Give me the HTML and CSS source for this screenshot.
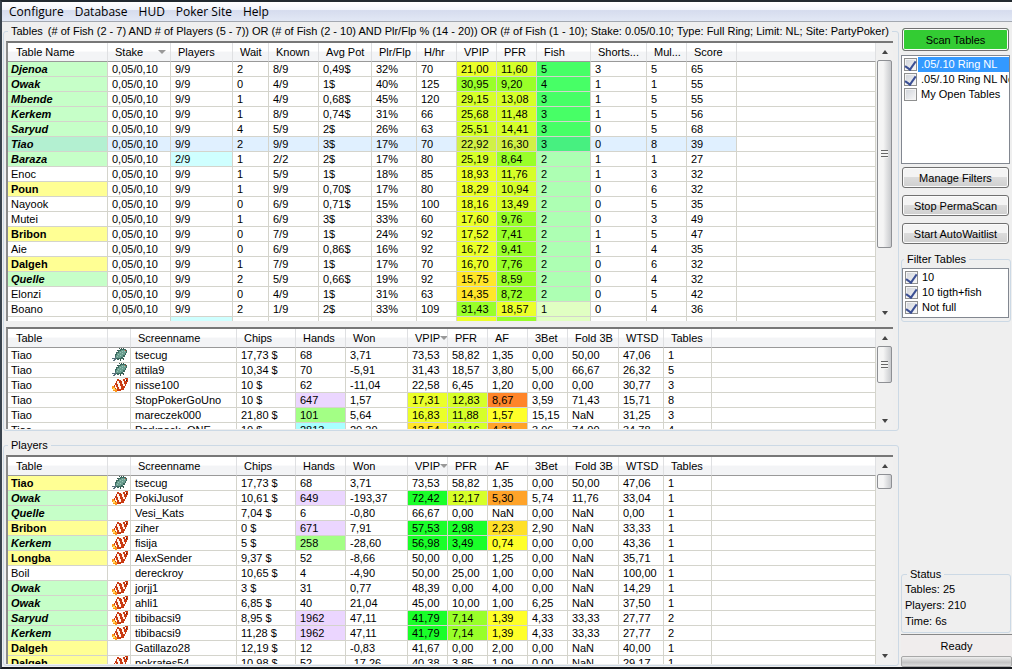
FILE: index.html
```html
<!DOCTYPE html>
<html lang="en">
<head>
  <meta charset="UTF-8">
  <title>Table Scanner</title>
  <link rel="stylesheet" href="styles.css">
</head>
<body>
  <svg class="sprites" aria-hidden="true">
    <symbol id="clownfish" viewBox="0 0 16 14">
      <path fill="#c93a12" d="M2 7H3V5H4V3H5V1H13V0H16V4H15V6H14V8H13V10H12V12H9V13H5V11H3V9H2Z"/>
      <path fill="#ff981c" d="M0 8H2V9H3V11H5V14H3V13H1V11H0Z"/>
      <path fill="#ffe060" d="M1 10H3V12H1Z"/>
      <path fill="#fff6ee" d="M5 3H7V5H8V8H9V11H7V9H6V6H5ZM9 1H11V3H12V6H13V8H11V6H10V3H9ZM3 7H4V9H5V11H4V10H3Z"/>
      <path fill="#fff" d="M7 1H9V2H7ZM13 1H14V3H13Z"/>
      <path fill="#301008" d="M14 2H15V3H14Z"/>
    </symbol>
    <symbol id="greyfish" viewBox="0 0 16 14">
      <path fill="#3c6a60" d="M3 6H4V4H6V2H8V1H14V2H15V5H14V7H13V9H11V11H7V12H5V11H3Z"/>
      <path fill="#6b9e90" d="M4 7H5V5H7V3H9V2H14V5H13V7H11V9H9V10H4Z"/>
      <path fill="#98c4b6" d="M6 6H7V7H6ZM8 4H9V5H8ZM8 7H9V8H8ZM10 5H11V6H10ZM10 3H11V4H10ZM12 3H13V4H12ZM5 8H6V9H5Z"/>
      <path fill="#58707c" d="M0 10H3V9H4V12H3V13H1V12H2V11H0Z"/>
      <path fill="#35544c" d="M7 0H8V1H7ZM9 0H10V1H9ZM11 0H12V1H11ZM5 2H6V3H5ZM8 11H9V13H8ZM11 10H12V12H11Z"/>
      <path fill="#b8452c" d="M13 2H14V3H13Z"/>
    </symbol>
  </svg>

  <div class="window">
    <nav class="menu">
      <a href="#configure">Configure</a>
      <a href="#database">Database</a>
      <a href="#hud">HUD</a>
      <a href="#site">Poker Site</a>
      <a href="#help">Help</a>
    </nav>

    <div class="workspace">
      <main>
        <fieldset class="group">
          <legend>Tables <span class="filter">(# of Fish (2 - 7) AND # of Players (5 - 7)) OR (# of Fish (2 - 10) AND Plr/Flp % (14 - 20)) OR (# of Fish (1 - 10); Stake: 0.05/0.10; Type: Full Ring; Limit: NL; Site: PartyPoker)</span></legend>
          <div class="list list-tables">
            <div class="view"><table id="tables"></table></div>
            <div class="scroll">
              <button class="up" aria-label="Scroll up"></button>
              <div class="thumb thumb-long"><i class="grip"></i></div>
              <button class="down" aria-label="Scroll down"></button>
            </div>
          </div>
          <div class="list list-seats">
            <div class="view"><table id="seats"></table></div>
            <div class="scroll">
              <button class="up" aria-label="Scroll up"></button>
              <div class="thumb thumb-mid"><i class="grip"></i></div>
              <button class="down" aria-label="Scroll down"></button>
            </div>
          </div>
        </fieldset>

        <fieldset class="group group-players">
          <legend>Players</legend>
          <div class="list list-players">
            <div class="view"><table id="players"></table></div>
            <div class="scroll">
              <button class="up" aria-label="Scroll up"></button>
              <div class="thumb thumb-short"></div>
              <button class="down" aria-label="Scroll down"></button>
            </div>
          </div>
        </fieldset>
      </main>

      <aside>
        <button class="btn scan">Scan Tables</button>
        <div class="checks scans">
          <label class="selected"><input type="checkbox" checked><span>.05/.10 Ring NL</span></label>
          <label><input type="checkbox" checked><span>.05/.10 Ring NL Not full</span></label>
          <label><input type="checkbox"><span>My Open Tables</span></label>
        </div>
        <button class="btn">Manage Filters</button>
        <button class="btn">Stop PermaScan</button>
        <button class="btn">Start AutoWaitlist</button>
        <fieldset class="group side-group">
          <legend>Filter Tables</legend>
          <div class="checks">
            <label><input type="checkbox" checked><span>10</span></label>
            <label><input type="checkbox" checked><span>10 tigth+fish</span></label>
            <label><input type="checkbox" checked><span>Not full</span></label>
          </div>
        </fieldset>
        <fieldset class="group side-group status">
          <legend>Status</legend>
          <p>Tables: 25</p>
          <p>Players: 210</p>
          <p>Time: 6s</p>
        </fieldset>
        <div class="ready">Ready</div>
        <div class="progress"></div>
      </aside>
    </div>
  </div>

  <script>
    // cell format: "text" or "text:class"
    const tableCols = [
      ['Table Name', 100], ['Stake', 63, 'sort-right'], ['Players', 62], ['Wait', 36], ['Known', 50],
      ['Avg Pot', 53], ['Plr/Flp', 45], ['H/hr', 40], ['VPIP', 40], ['PFR', 40], ['Fish', 54],
      ['Shorts...', 56], ['Mul...', 40], ['Score', 50]
    ];
    const playerCols = [
      ['Table', 100], ['', 23], ['Screenname', 106], ['Chips', 59], ['Hands', 50], ['Won', 62],
      ['VPIP', 40, 'sort'], ['PFR', 40], ['AF', 40], ['3Bet', 40], ['Fold 3B', 51], ['WTSD', 45], ['Tables', 48]
    ];

    const tables = [
      'Djenoa:green|0,05/0,10|9/9|2|8/9|0,49$|32%|70|21,00:s2|11,60:s3|5:f3|3|5|65',
      'Owak:green|0,05/0,10|9/9|0|4/9|1$|40%|125|30,95:s4|9,20:s4|4:f3|1|1|55',
      'Mbende:green|0,05/0,10|9/9|1|4/9|0,68$|45%|120|29,15:s3|13,08:s3|3:f3|1|5|55',
      'Kerkem:green|0,05/0,10|9/9|1|8/9|0,74$|31%|66|25,68:s3|11,48:s3|3:f3|1|5|56',
      'Saryud:green|0,05/0,10|9/9|4|5/9|2$|26%|63|25,51:s3|14,41:s3|3:f3|0|5|68',
      'Tiao:green|0,05/0,10|9/9|2|9/9|3$|17%|70|22,92:s3|16,30:s3|3:f3|0|8|39',
      'Baraza:green|0,05/0,10|2/9:cyan|1|2/2|2$|17%|80|25,19:s3|8,64:s4|2:f2|1|1|27',
      'Enoc|0,05/0,10|9/9|1|5/9|1$|18%|85|18,93:s2|11,76:s3|2:f2|1|3|32',
      'Poun:yellow|0,05/0,10|9/9|1|9/9|0,70$|17%|80|18,29:s2|10,94:s3|2:f2|0|6|32',
      'Nayook|0,05/0,10|9/9|0|6/9|0,71$|15%|100|18,16:s2|13,49:s3|2:f2|0|5|35',
      'Mutei|0,05/0,10|9/9|1|6/9|3$|33%|60|17,60:s2|9,76:s4|2:f2|0|3|49',
      'Bribon:yellow|0,05/0,10|9/9|0|7/9|1$|24%|92|17,52:s2|7,41:s4|2:f2|1|5|47',
      'Aie|0,05/0,10|9/9|0|6/9|0,86$|16%|92|16,72:s2|9,41:s4|2:f2|1|4|35',
      'Dalgeh:yellow|0,05/0,10|9/9|1|7/9|1$|17%|70|16,70:s2|7,76:s4|2:f2|0|6|32',
      'Quelle:green|0,05/0,10|9/9|2|5/9|0,66$|19%|92|15,75:s1|8,59:s4|2:f2|0|4|32',
      'Elonzi|0,05/0,10|9/9|0|4/9|1$|31%|63|14,35:s1|8,72:s4|2:f2|0|5|42',
      'Boano|0,05/0,10|9/9|2|1/9|2$|33%|109|31,43:s4|18,57:s2|1:f1|0|4|36',
      '||:cyan||||||:s2|:s4|:f1|||'
    ];
    const seats = [
      'Tiao|#greyfish|tsecug|17,73 $|68|3,71|73,53|58,82|1,35|0,00|50,00|47,06|1',
      'Tiao|#greyfish|attila9|10,34 $|70|-5,91|31,43|18,57|3,80|5,00|66,67|26,32|5',
      'Tiao|#clownfish|nisse100|10 $|62|-11,04|22,58|6,45|1,20|0,00|0,00|30,77|3',
      'Tiao||StopPokerGoUno|10 $|647:violet|1,57|17,31:s2|12,83:s3|8,67:a4|3,59|71,43|15,71|8',
      'Tiao||mareczek000|21,80 $|101:lime|5,64|16,83:s2|11,88:s3|1,57:a1|15,15|NaN|31,25|3',
      'Tiao||Parkpack_ONE|10 $|2813:aqua|20,30|13,54:s1|10,16:s3|4,31:a3|3,06|74,00|34,78|4'
    ];
    const players = [
      'Tiao:yellow|#greyfish|tsecug|17,73 $|68|3,71|73,53|58,82|1,35|0,00|50,00|47,06|1',
      'Owak:green|#clownfish|PokiJusof|10,61 $|649:violet|-193,37|72,42:s5|12,17:s3|5,30:a3|5,74|11,76|33,04|1',
      'Quelle:green||Vesi_Kats|7,04 $|6|-0,80|66,67|0,00|NaN|0,00|NaN|0,00|1',
      'Bribon:yellow|#clownfish|ziher|0 $|671:violet|7,91|57,53:s5|2,98:s5|2,23:a2|2,90|NaN|33,33|1',
      'Kerkem:green|#clownfish|fisija|5 $|258:lime|-28,60|56,98:s5|3,49:s5|0,74:a1|0,00|0,00|43,36|1',
      'Longba:yellow|#clownfish|AlexSender|9,37 $|52|-8,66|50,00|0,00|1,25|0,00|NaN|35,71|1',
      'Boil||dereckroy|10,65 $|4|-4,90|50,00|25,00|1,00|0,00|NaN|100,00|1',
      'Owak:green|#clownfish|jorjj1|3 $|31|0,77|48,39|0,00|4,00|0,00|NaN|14,29|1',
      'Owak:green|#clownfish|ahli1|6,85 $|40|21,04|45,00|10,00|1,00|6,25|NaN|37,50|1',
      'Saryud:green|#clownfish|tibibacsi9|8,95 $|1962:violet|47,11|41,79:s5|7,14:s4|1,39:a1|4,33|33,33|27,77|2',
      'Kerkem:green|#clownfish|tibibacsi9|11,28 $|1962:violet|47,11|41,79:s5|7,14:s4|1,39:a1|4,33|33,33|27,77|2',
      'Dalgeh:yellow||Gatillazo28|12,19 $|12|-0,83|41,67|0,00|2,00|0,00|NaN|40,00|1',
      'Dalgeh:yellow|#clownfish|pokrates54|10,98 $|52|-17,26|40,38|3,85|1,09|0,00|NaN|29,17|1'
    ];

    function cellHTML(cell) {
      if (cell.startsWith('#')) {
        return `<td class="icon"><svg width="16" height="14"><use href="${cell}"/></svg></td>`;
      }
      const [text, cls] = cell.split(':');
      return `<td class="${cls || ''}">${text}</td>`;
    }

    function fill(id, cols, rows, selected) {
      const head = cols.map(c => `<th class="${c[2] || ''}">${c[0]}</th>`).join('');
      const body = rows.map((row, i) =>
        `<tr class="${i === selected ? 'current' : ''}">${row.split('|').map(cellHTML).join('')}<td class="rest"></td></tr>`
      ).join('');
      document.getElementById(id).innerHTML = `
        <colgroup>${cols.map(c => `<col style="width:${c[1]}px">`).join('')}<col></colgroup>
        <thead><tr>${head}<th></th></tr></thead>
        <tbody>${body}</tbody>`;
    }

    fill('tables', tableCols, tables, 5);
    fill('seats', playerCols, seats);
    fill('players', playerCols, players);
  </script>
</body>
</html>
```
FILE: styles.css
```css
* {
  box-sizing: border-box;
}

body {
  margin: 0;
  font-family: "Liberation Sans", Arial, sans-serif;
  font-size: 11px;
  line-height: 14px;
  color: #000;
  background: #efefef;
}

.sprites {
  display: none;
}

.window {
  display: flex;
  flex-direction: column;
  height: 100vh;
  border-top: 2px solid #222a30;
  border-left: 2px solid #39434d;
  border-bottom: 2px solid #15181c;
  overflow: hidden;
}

/* Menu */
.menu {
  display: flex;
  flex: none;
  gap: 11px;
  height: 20px;
  padding: 0 7px;
  font-family: "Open Sans", "Noto Sans", sans-serif;
  font-size: 12px;
  line-height: 20px;
  background: linear-gradient(#fff 0, #f2f5fb 40%, #d6dcee 45%, #e2e8f5 100%);
  border-bottom: 1px solid #a3a8b0;
}

.menu a {
  color: #000;
  text-decoration: none;
}

.workspace {
  display: flex;
  flex: 1;
  min-height: 0;
}

main {
  display: flex;
  flex: 1;
  flex-direction: column;
  min-width: 0;
  padding: 2px 1px 1px;
}

/* Group boxes */
.group {
  min-width: 0;
  margin: 0;
  padding: 3px 5px 1px 2px;
  border: 1px solid #ccd9e5;
  border-radius: 3px;
}

.group legend {
  margin-left: 2px;
  padding: 0 3px;
  white-space: nowrap;
}

.filter {
  margin-left: 2px;
}

.group-players {
  display: flex;
  flex: 1;
  flex-direction: column;
  min-height: 0;
  margin-top: 7px;
}

/* Lists */
.list {
  display: flex;
  background: #fff;
  border-top: 2px solid #777;
  border-left: 2px solid #8a8a8a;
  overflow: hidden;
}

.list-tables {
  height: 280px;
  margin-bottom: 6px;
}

.list-seats {
  height: 102px;
}

.list-players {
  flex: 1;
  min-height: 0;
}

.view {
  flex: 1;
  min-width: 0;
  overflow: hidden;
}

table {
  width: 100%;
  table-layout: fixed;
  border-collapse: separate;
  border-spacing: 0;
}

th {
  height: 19px;
  padding: 0 0 0 7px;
  font-weight: normal;
  text-align: left;
  white-space: nowrap;
  overflow: hidden;
  background: linear-gradient(#fff 45%, #f3f4f6 50%);
  border-right: 1px solid #dfe0e2;
  border-bottom: 1px solid #999;
}

th:first-child {
  padding-left: 8px;
}

.sort::after,
.sort-right::after {
  content: "";
  display: inline-block;
  vertical-align: 2px;
  border: 4px solid transparent;
  border-top-color: #999;
  border-bottom: 0;
}

.sort-right::after {
  float: right;
  margin: 5px 4px 0 0;
}

td {
  height: 15px;
  padding: 0 0 0 4px;
  line-height: 14px;
  white-space: nowrap;
  overflow: hidden;
  border-right: 1px solid #d4d4cc;
  border-bottom: 1px solid #d4d4cc;
}

td:first-child {
  padding-left: 3px;
}

td.icon svg {
  display: block;
  shape-rendering: crispEdges;
}

/* Table name markers */
.green {
  font-weight: bold;
  font-style: italic;
  background: #c6ffc8;
}

.yellow {
  font-weight: bold;
  background: #ffff94;
}

.cyan { background: #cfffff; }
.aqua { background: #a8ffff; }
.violet { background: #ebd6ff; }
.lime { background: #a3ff85; }

/* Looseness scale */
.s1 { background: #ffe629; }
.s2 { background: #ebff29; }
.s3 { background: #d6ff29; }
.s4 { background: #99ff29; }
.s5 { background: #1aff29; }

/* Aggression scale */
.a1 { background: #ffff29; }
.a2 { background: #ffe029; }
.a3 { background: #ffa329; }
.a4 { background: #ff8529; }

/* Fish count */
.f1 { background: #e0ffc2; }
.f2 { background: #adffb3; }
.f3 { background: #47ff66; }

.current td { background: #e0f0ff; }
.current .green { background: #b3f0d1; }
.current .s3 { background: #d1f047; }
.current .f3 { background: #47f080; }
.current .rest { background: #fff; }

/* Scroll bars */
.scroll {
  display: flex;
  flex: none;
  flex-direction: column;
  width: 17px;
  background: #f0f0f0;
}

.scroll button {
  height: 17px;
  padding: 0;
  background: none;
  border: 0;
}

.scroll button::before {
  content: "";
  display: block;
  width: 0;
  margin: 0 auto;
  border: 3px solid transparent;
}

.scroll .up::before {
  border-top: 0;
  border-bottom: 4px solid #444;
}

.scroll .down::before {
  border-top: 4px solid #444;
  border-bottom: 0;
}

.scroll .down {
  margin-top: auto;
}

.thumb {
  display: flex;
  align-items: center;
  justify-content: center;
  width: 15px;
  margin-left: 1px;
  background: linear-gradient(to right, #f5f5f5 40%, #c8cacd);
  border: 1px solid #8e9094;
  border-radius: 2px;
}

.thumb-long { height: 188px; }
.thumb-mid { height: 37px; }
.thumb-short { height: 15px; }

.grip {
  width: 7px;
  height: 8px;
  background: repeating-linear-gradient(#666 0, #666 1px, #f4f4f4 1px, #f4f4f4 3px);
}

/* Sidebar */
aside {
  display: flex;
  flex: none;
  flex-direction: column;
  width: 112px;
  padding: 6px 0 0 1px;
}

.btn {
  flex: none;
  height: 21px;
  margin: 0 3px 7px 1px;
  padding: 0;
  font: inherit;
  color: #000;
  white-space: nowrap;
  background: linear-gradient(#f4f4f4 45%, #dcdcdc 50%, #cfcfcf);
  border: 1px solid #707070;
  border-radius: 3px;
  box-shadow: inset 0 0 0 1px #fbfbfb;
}

.scan {
  height: 23px;
  margin-bottom: 4px;
  background: #33cc33;
}

.checks {
  background: #fff;
  border: 1px solid #828790;
  overflow: hidden;
}

.scans {
  height: 109px;
  margin: 0 2px 3px 0;
}

.checks label {
  display: flex;
  align-items: center;
  height: 15px;
  padding-left: 2px;
  white-space: nowrap;
}

.checks label:first-child {
  margin-top: 1px;
}

.checks input {
  flex: none;
  appearance: none;
  width: 13px;
  height: 13px;
  margin: 0 1px 0 0;
  background: linear-gradient(135deg, #cfd3da, #f8f8f8);
  border: 1px solid #8e8f8f;
  box-shadow: inset 0 0 0 1px #f4f4f4;
}

.checks input:checked::before {
  content: "";
  display: block;
  width: 5px;
  height: 9px;
  margin: 0 auto;
  border: solid #3b4f94;
  border-width: 0 2px 2px 0;
  transform: rotate(35deg);
}

.checks span {
  flex: 1;
  padding-left: 3px;
  line-height: 15px;
}

.selected span {
  color: #fff;
  background: #3399ff;
}

.side-group {
  margin: 1px 1px 0 0;
  padding: 2px 1px 3px 0;
}

.side-group .checks {
  padding-bottom: 2px;
}

.status {
  margin-top: auto;
  padding: 0 3px 3px;
}

.status p {
  margin: 0;
  line-height: 16px;
}

.ready {
  flex: none;
  height: 22px;
  margin-top: 1px;
  line-height: 23px;
  text-align: center;
  background: #f0eded;
  border-top: 1px solid #888;
}

.progress {
  flex: none;
  height: 11px;
  background: linear-gradient(#eee, #c4c4c4 60%, #ddd);
  border: 1px solid #a8a8a8;
  border-radius: 2px;
}
```
